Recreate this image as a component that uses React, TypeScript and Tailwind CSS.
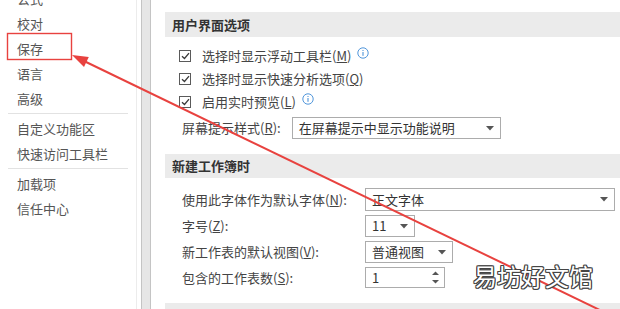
import React from "react";

const navTop = ["公式", "校对", "保存", "语言", "高级"];
const navMid = ["自定义功能区", "快速访问工具栏"];
const navEnd = ["加载项", "信任中心"];

function NavItem({ label }: { label: string }) {
  return (
    <div className="h-[25px] flex items-center pl-[17px] text-[13px] text-[#555]">
      {label}
    </div>
  );
}

function Check() {
  return (
    <span className="w-[12px] h-[12px] border border-[#5a5a5a] bg-white flex items-center justify-center shrink-0">
      <svg width="9" height="8" viewBox="0 0 9 8">
        <path d="M1 4.2 L3.5 6.5 L8 1.2" fill="none" stroke="#3a3a3a" strokeWidth="1.3" />
      </svg>
    </span>
  );
}

function Info() {
  return (
    <svg width="12" height="12" viewBox="0 0 12 12" className="ml-[6px] -mt-[6px]">
      <circle cx="6" cy="6" r="5.2" fill="none" stroke="#3d8ad6" strokeWidth="0.9" />
      <rect x="5.5" y="5" width="1" height="3.8" fill="#3d8ad6" />
      <rect x="5.5" y="3" width="1" height="1" fill="#3d8ad6" />
    </svg>
  );
}

function Caret() {
  return (
    <svg width="8" height="5" viewBox="0 0 8 5" className="shrink-0">
      <path d="M0 0 L8 0 L4 4.5 Z" fill="#555" />
    </svg>
  );
}

function Select({ text, w, h = "h-[22px]" }: { text: string; w: string; h?: string }) {
  return (
    <div className={`${w} ${h} border border-[#acacac] bg-white flex items-center justify-between pl-[6px] pr-[6px] text-[13px] text-[#333] shrink-0`}>
      <span>{text}</span>
      <Caret />
    </div>
  );
}

export default function App() {
  return (
    <div className="relative w-[620px] h-[309px] overflow-hidden bg-white flex font-['Noto_Sans_CJK_SC','Microsoft_YaHei',sans-serif]">
      {/* left nav */}
      <div className="w-[137px] shrink-0 border-r border-[#ececec]">
        <div className="mt-[-14px]">
          {navTop.map((l) => (
            <NavItem key={l} label={l} />
          ))}
          <div className="mx-[8px] my-[2px] h-px bg-[#e2e2e2]" />
          {navMid.map((l) => (
            <NavItem key={l} label={l} />
          ))}
          <div className="mx-[8px] my-[2px] h-px bg-[#e2e2e2]" />
          {navEnd.map((l) => (
            <NavItem key={l} label={l} />
          ))}
        </div>
      </div>

      {/* scrollbar */}
      <div className="w-[4px] shrink-0" />
      <div className="w-[10px] shrink-0 bg-[#e6e6e6] border-x border-[#c4c4c4]" />

      {/* content */}
      <div className="flex-1 pl-[14px] pt-[12px] text-[13px] text-[#444]">
        <div className="h-[25px] bg-[#ebebeb] pl-[7px] flex items-center font-bold text-[#333]">
          用户界面选项
        </div>

        <div className="mt-[7.5px] pl-[14px]">
          <div className="h-[23px] flex items-center gap-[11px]">
            <Check />
            <span className="flex items-center">
              选择时显示浮动工具栏(<u>M</u>)
              <Info />
            </span>
          </div>
          <div className="h-[23px] flex items-center gap-[11px]">
            <Check />
            <span>
              选择时显示快速分析选项(<u>Q</u>)
            </span>
          </div>
          <div className="h-[23px] flex items-center gap-[11px]">
            <Check />
            <span className="flex items-center">
              启用实时预览(<u>L</u>)
              <Info />
            </span>
          </div>
        </div>

        <div className="mt-[3.5px] pl-[17px] flex items-center">
          <span>
            屏幕提示样式(<u>R</u>):
          </span>
          <div className="ml-[11px]">
            <Select text="在屏幕提示中显示功能说明" w="w-[209px]" />
          </div>
        </div>

        <div className="mt-[15px] h-[24px] bg-[#ebebeb] pl-[7px] flex items-center font-bold text-[#333]">
          新建工作簿时
        </div>

        <div className="mt-[10px] pl-[17px] flex items-center">
          <span className="w-[183px] shrink-0">
            使用此字体作为默认字体(<u>N</u>):
          </span>
          <Select text="正文字体" w="w-[250px]" h="h-[23px]" />
        </div>
        <div className="mt-[4px] pl-[17px] flex items-center">
          <span className="w-[183px] shrink-0">
            字号(<u>Z</u>):
          </span>
          <Select text="11" w="w-[50px]" />
        </div>
        <div className="mt-[4px] pl-[17px] flex items-center">
          <span className="w-[183px] shrink-0">
            新工作表的默认视图(<u>V</u>):
          </span>
          <Select text="普通视图" w="w-[88px]" />
        </div>
        <div className="mt-[4px] pl-[17px] flex items-center">
          <span className="w-[183px] shrink-0">
            包含的工作表数(<u>S</u>):
          </span>
          <div className="w-[80px] h-[21px] border border-[#acacac] bg-white flex items-center justify-between pl-[6px] pr-[5px] text-[#333]">
            <span>1</span>
            <svg width="7" height="13" viewBox="0 0 7 13">
              <path d="M0 4 L7 4 L3.5 0.5 Z" fill="#555" />
              <path d="M0 9 L7 9 L3.5 12.5 Z" fill="#555" />
            </svg>
          </div>
        </div>

        <div className="mt-[15px] h-[25px] bg-[#ebebeb]" />
      </div>

      {/* annotation: red box + arrow */}
      <svg className="absolute left-0 top-0 pointer-events-none" width="620" height="309" viewBox="0 0 620 309">
        <rect x="7.5" y="33.5" width="64" height="26" fill="none" stroke="#e8423f" strokeWidth="1.4" />
        <line x1="84" y1="61" x2="606" y2="313" stroke="#e8423f" strokeWidth="2" />
        <polygon points="72,55 88.8,57 84,67" fill="#e8423f" />
      </svg>

      {/* watermark */}
      <div className="absolute left-[473px] top-[261px] text-[24px] leading-[30px] text-white [text-shadow:1px_1px_0_#444,-1px_-1px_0_#444,1px_-1px_0_#444,-1px_1px_0_#444,0_1px_0_#444,0_-1px_0_#444,1px_0_0_#444,-1px_0_0_#444]">
        易坊好文馆
      </div>
    </div>
  );
}
